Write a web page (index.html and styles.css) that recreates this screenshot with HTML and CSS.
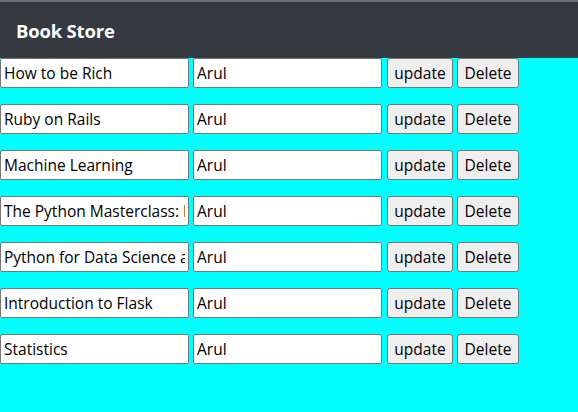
FILE: index.html
```html
<!DOCTYPE html>
<html>
<head>
<meta charset="utf-8">
<link rel="stylesheet" href="styles.css">
</head>
<body>
<header class="navbar"><span class="brand">Book Store</span></header>
<main class="list">
  <div class="row"><input class="field title" value="How to be Rich"><input class="field author" value="Arul"><button class="btn upd">update</button><button class="btn del">Delete</button></div>
  <div class="row"><input class="field title" value="Ruby on Rails"><input class="field author" value="Arul"><button class="btn upd">update</button><button class="btn del">Delete</button></div>
  <div class="row"><input class="field title" value="Machine Learning"><input class="field author" value="Arul"><button class="btn upd">update</button><button class="btn del">Delete</button></div>
  <div class="row"><input class="field title" value="The Python Masterclass: Python 3"><input class="field author" value="Arul"><button class="btn upd">update</button><button class="btn del">Delete</button></div>
  <div class="row"><input class="field title" value="Python for Data Science and AI"><input class="field author" value="Arul"><button class="btn upd">update</button><button class="btn del">Delete</button></div>
  <div class="row"><input class="field title" value="Introduction to Flask"><input class="field author" value="Arul"><button class="btn upd">update</button><button class="btn del">Delete</button></div>
  <div class="row"><input class="field title" value="Statistics"><input class="field author" value="Arul"><button class="btn upd">update</button><button class="btn del">Delete</button></div>
</main>
</body>
</html>
```
FILE: styles.css
```css
html, body {
  margin: 0;
  padding: 0;
}
body {
  background: #00ffff;
  font-family: "Open Sans", "Noto Sans", sans-serif;
  height: 412px;
}
.navbar {
  background: #343a40;
  border-top: 2px solid #6b6e72;
  height: 56px;
  display: flex;
  align-items: center;
  padding: 0 16px;
}
.brand {
  color: #ffffff;
  font-weight: 700;
  font-size: 18.5px;
  letter-spacing: -0.2px;
}
.list {
  display: flex;
  flex-direction: column;
  gap: 16px;
}
.row {
  display: flex;
  align-items: stretch;
  gap: 4px;
  height: 30px;
}
.field {
  box-sizing: border-box;
  height: 30px;
  margin: 0;
  border: 1px solid #767676;
  border-radius: 2px;
  background: #fff;
  font-family: inherit;
  font-size: 15.5px;
  color: #000;
  padding: 0 3px;
  outline: none;
}
.title { width: 189px; }
.author { width: 189px; }
.btn {
  box-sizing: border-box;
  height: 30px;
  margin: 0;
  border: 1px solid #767676;
  border-radius: 3px;
  background: #efefef;
  font-family: inherit;
  font-size: 15.5px;
  color: #000;
  padding: 0;
}
.upd { width: 66px; margin-left: 1px; }
.del { width: 62px; }
```
